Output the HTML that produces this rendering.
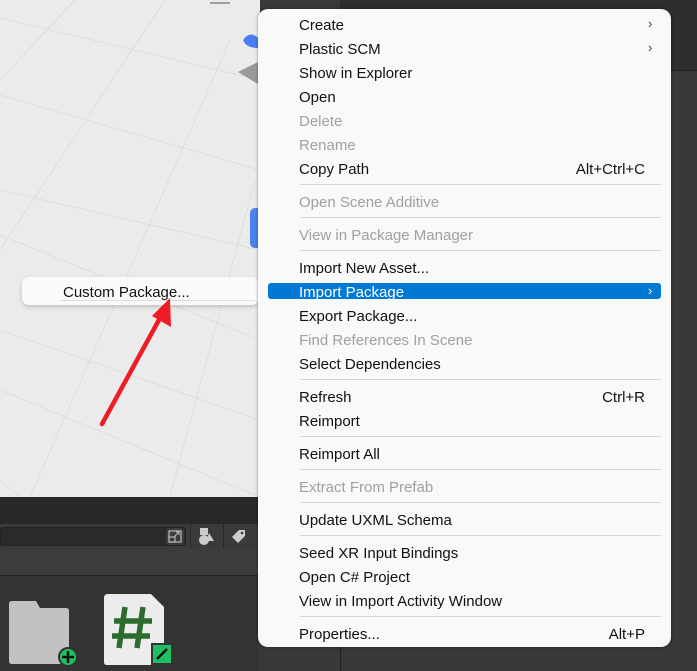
<!DOCTYPE html>
<html><head><meta charset="utf-8"><style>
*{margin:0;padding:0;box-sizing:border-box}
body{width:697px;height:671px;overflow:hidden;position:relative;background:#383838;font-family:"Segoe UI","Liberation Sans",sans-serif}
.a{position:absolute}
.mi{position:absolute;left:299px;height:24px;line-height:28px;font-size:15px;color:#111;white-space:nowrap}
.dis{color:#a0a0a0}
.sc{position:absolute;right:52px;height:24px;line-height:28px;font-size:15px;color:#111}
.sep{position:absolute;left:300px;width:361px;height:1px;background:#d6d6d6}
.ar{position:absolute;left:648px;font-size:13px;color:#444;height:24px;line-height:24px}
</style></head><body>
<div class="a" style="left:0;top:0;width:260px;height:497px;background:#ebebeb"></div>
<svg class="a" style="left:0;top:0" width="260" height="497">
<g stroke="#dadada" stroke-width="0.8" fill="none">
<line x1="0" y1="18" x2="260" y2="80"/><line x1="0" y1="95" x2="260" y2="170"/><line x1="0" y1="190" x2="260" y2="250"/>
<line x1="0" y1="235" x2="260" y2="340"/><line x1="0" y1="330" x2="260" y2="420"/><line x1="0" y1="390" x2="260" y2="497"/>
<line x1="75" y1="0" x2="0" y2="80"/><line x1="165" y1="0" x2="0" y2="250"/><line x1="230" y1="40" x2="30" y2="497"/>
<line x1="255" y1="180" x2="170" y2="497"/><line x1="0" y1="480" x2="20" y2="497"/>
</g>
<line x1="210" y1="3" x2="230" y2="3" stroke="#555"/>
<path d="M243 40 Q250 30 258 38 L258 48 Q246 48 243 40Z" fill="#4a7ef0"/>
<path d="M238 72 L258 62 L258 84 Z" fill="#9a9a9a"/>
<rect x="250" y="208" width="12" height="40" rx="5" fill="#4a82f0"/>
</svg>
<div class="a" style="left:340px;top:647px;width:1px;height:24px;background:#222"></div>
<div class="a" style="left:340px;top:0;width:357px;height:70px;background:#2e2e2e"></div>
<div class="a" style="left:340px;top:70px;width:357px;height:1px;background:#222"></div>
<!-- bottom panel -->
<div class="a" style="left:0;top:497px;width:260px;height:27px;background:#282828"></div>
<div class="a" style="left:0;top:524px;width:260px;height:24px;background:#3a3a3a"></div>
<div class="a" style="left:0;top:527px;width:186px;height:19px;background:#2a2a2a;border:1px solid #222;border-radius:3px"></div>
<div class="a" style="left:190px;top:524px;width:1px;height:24px;background:#2a2a2a"></div>
<div class="a" style="left:223px;top:524px;width:1px;height:24px;background:#2a2a2a"></div>
<svg class="a" style="left:165px;top:527px" width="90" height="20">
<rect x="1" y="1" width="18" height="17" rx="3" fill="#3c3c3c"/>
<rect x="4" y="4" width="12" height="11" fill="none" stroke="#bbb" stroke-width="1.2"/>
<rect x="4" y="10" width="6" height="5" fill="#3c3c3c" stroke="#bbb" stroke-width="1.2"/>
<path d="M9 10 L14 5 M11 5 H14 V8" stroke="#bbb" fill="none"/>
<rect x="35" y="1" width="8" height="7" fill="#ccc"/><circle cx="39" cy="13" r="5" fill="#ccc"/><path d="M44 6 L49 14 L41 14Z" fill="#ccc"/>
<path d="M67 10 L74 3 L80 3 L80 9 L73 16Z" fill="#ccc"/><circle cx="77" cy="6" r="1.3" fill="#3a3a3a"/>
</svg>
<div class="a" style="left:0;top:548px;width:260px;height:27px;background:#3c3c3c"></div>
<div class="a" style="left:0;top:575px;width:260px;height:1px;background:#222"></div>
<div class="a" style="left:0;top:576px;width:258px;height:95px;background:#333"></div>
<svg class="a" style="left:0;top:576px" width="258" height="95">
<path d="M9 32 V28 Q9 25 12 25 H36 L40 32 H66 Q69 32 69 35 V88 H12 Q9 88 9 85Z" fill="#c2c2c2"/>
<circle cx="68" cy="81" r="9" fill="#1fc063" stroke="#333" stroke-width="2"/>
<path d="M68 75V87M62 81H74" stroke="#111" stroke-width="2.5"/>
<path d="M108 18 Q104 18 104 22 V86 Q104 89 107 89 H164 V31 L151 18Z" fill="#ececec"/>
<g stroke="#2e6b2e" stroke-width="5.5"><path d="M125 31 L119 72 M143 31 L137 72 M114 45 H152 M112 60 H150"/></g>
<rect x="152" y="68" width="20" height="20" fill="#1fc063" stroke="#333" stroke-width="2"/>
<path d="M157 83 L167 73" stroke="#111" stroke-width="2.5"/>
</svg>
<!-- submenu -->
<div class="a" style="left:22px;top:277px;width:237px;height:28px;background:#fafafa;border-radius:7px;box-shadow:0 2px 5px rgba(0,0,0,.18)"></div>
<div class="a" style="left:63px;top:279px;font-size:15px;line-height:28px;color:#111">Custom Package...</div>
<div class="a" style="left:60px;top:300px;width:195px;height:1px;background:#ddd"></div>
<svg class="a" style="left:0;top:0" width="260" height="497">
<line x1="102" y1="424" x2="160" y2="318" stroke="#ee1c25" stroke-width="4.5" stroke-linecap="round"/>
<path d="M170 298 L171 327 L152 316Z" fill="#ee1c25"/>
</svg>
<!-- main menu -->
<div class="a" style="left:258px;top:9px;width:413px;height:638px;background:#f9f9f9;border-radius:10px;box-shadow:0 0 3px rgba(0,0,0,.4)"></div>
<div class="a" style="left:268px;top:283px;width:393px;height:16px;background:#0078d4;border-radius:3px"></div>
<div class="mi" style="top:12px">Create</div><div class="ar" style="top:12px">›</div>
<div class="mi" style="top:36px">Plastic SCM</div><div class="ar" style="top:36px">›</div>
<div class="mi" style="top:60px">Show in Explorer</div>
<div class="mi" style="top:84px">Open</div>
<div class="mi dis" style="top:108px">Delete</div>
<div class="mi dis" style="top:132px">Rename</div>
<div class="mi" style="top:156px">Copy Path</div><div class="sc" style="top:156px">Alt+Ctrl+C</div>
<div class="sep" style="top:184px"></div>
<div class="mi dis" style="top:189px">Open Scene Additive</div>
<div class="sep" style="top:217px"></div>
<div class="mi dis" style="top:222px">View in Package Manager</div>
<div class="sep" style="top:250px"></div>
<div class="mi" style="top:255px">Import New Asset...</div>
<div class="mi" style="top:279px;color:#fff">Import Package</div><div class="ar" style="top:279px;color:#fff">›</div>
<div class="mi" style="top:303px">Export Package...</div>
<div class="mi dis" style="top:327px">Find References In Scene</div>
<div class="mi" style="top:351px">Select Dependencies</div>
<div class="sep" style="top:379px"></div>
<div class="mi" style="top:384px">Refresh</div><div class="sc" style="top:384px">Ctrl+R</div>
<div class="mi" style="top:408px">Reimport</div>
<div class="sep" style="top:436px"></div>
<div class="mi" style="top:441px">Reimport All</div>
<div class="sep" style="top:469px"></div>
<div class="mi dis" style="top:474px">Extract From Prefab</div>
<div class="sep" style="top:502px"></div>
<div class="mi" style="top:507px">Update UXML Schema</div>
<div class="sep" style="top:535px"></div>
<div class="mi" style="top:540px">Seed XR Input Bindings</div>
<div class="mi" style="top:564px">Open C# Project</div>
<div class="mi" style="top:588px">View in Import Activity Window</div>
<div class="sep" style="top:616px"></div>
<div class="mi" style="top:621px">Properties...</div><div class="sc" style="top:621px">Alt+P</div>
</body></html>
